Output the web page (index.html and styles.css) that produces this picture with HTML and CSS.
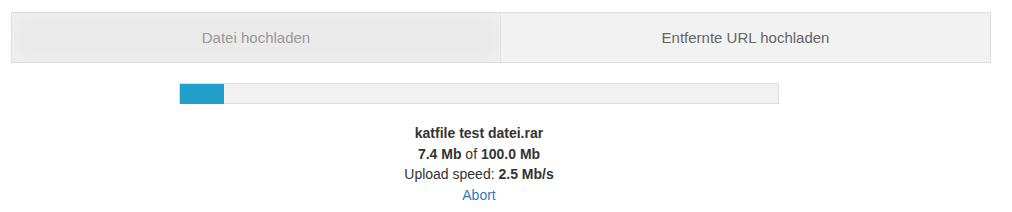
FILE: index.html
```html
<!DOCTYPE html>
<html lang="en">
<head>
    <meta charset="UTF-8">
    <title>Upload</title>
    <link rel="stylesheet" href="styles.css">
</head>
<body>
    <div class="tabs">
        <div class="tab active">Datei hochladen</div>
        <div class="tab">Entfernte URL hochladen</div>
    </div>

    <div class="upload">
        <div class="progress">
            <div class="progress-fill" style="width: 7.4%"></div>
        </div>
        <div class="info">
            <div class="name">katfile test datei.rar</div>
            <div><b>7.4 Mb</b> of <b>100.0 Mb</b></div>
            <div>Upload speed: <b>2.5 Mb/s</b></div>
            <div><a href="#" class="abort">Abort</a></div>
        </div>
    </div>
</body>
</html>
```

FILE: styles.css
```css
body {
    margin: 0;
    padding: 12px 21px 0 11px;
    font-family: "Liberation Sans", Arial, sans-serif;
    font-size: 14px;
    color: #333;
    background: #fff;
}

.tabs {
    display: flex;
    border: 1px solid #dedede;
}

.tab {
    flex: 1;
    height: 49px;
    display: flex;
    align-items: center;
    justify-content: center;
    background: #f2f2f2;
    color: #666;
    font-size: 15px;
}

.tab.active {
    flex: 0 0 488px;
    background: #eaeaea;
    box-shadow: inset 0 0 20px rgba(255, 255, 255, 0.35);
    color: #999;
    border-right: 1px solid #e2e2e2;
}

.upload {
    width: 600px;
    margin: 20px 0 0 168px;
}

.progress {
    height: 19px;
    border: 1px solid #ddd;
    background: #f1f1f1;
}

.progress-fill {
    height: 20px;
    background: #229ecb;
}

.info {
    margin-top: 19px;
    text-align: center;
    line-height: 20.5px;
}

.name {
    font-weight: bold;
}

.abort {
    color: #337ab7;
    text-decoration: none;
}
```
